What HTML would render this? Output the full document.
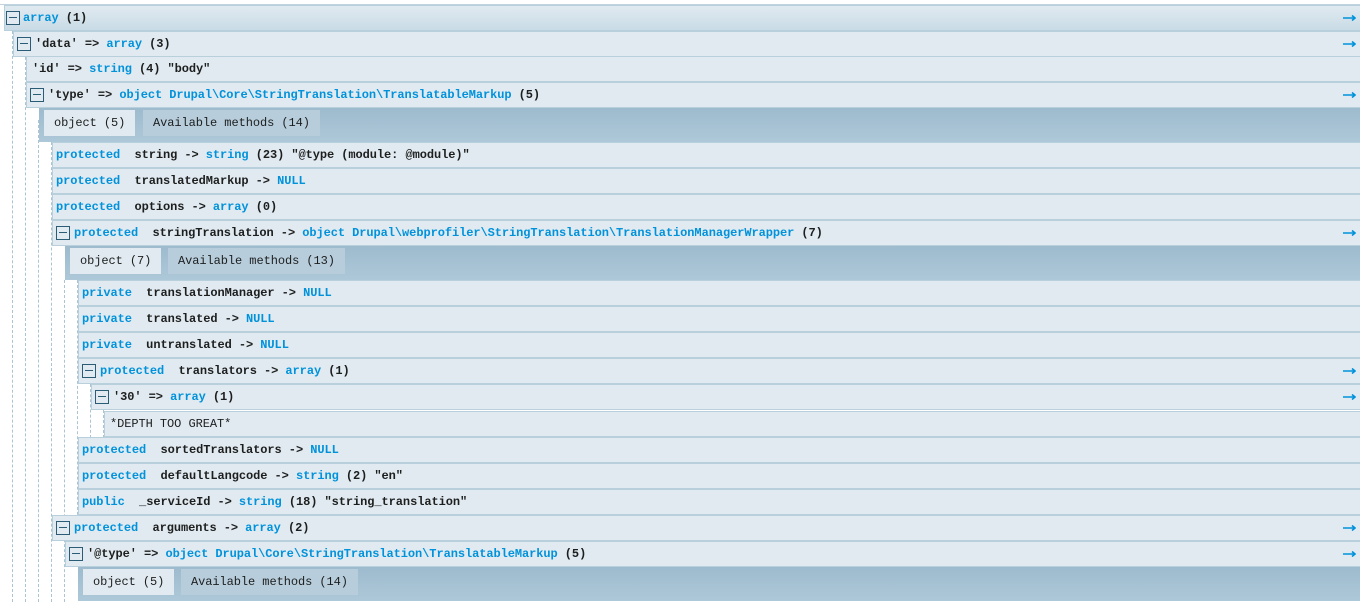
<!DOCTYPE html>
<html><head><meta charset="utf-8">
<style>
html,body{margin:0;padding:0;background:#fff;width:1360px;height:602px;overflow:hidden;position:relative;font-family:"Liberation Mono",monospace;font-size:12px;letter-spacing:-0.07px}
.r{position:absolute;right:0;height:24px;background:#e0eaf0;border:1px solid #b8cfdc;border-right:none;line-height:24px;color:#1d1e1e;font-weight:bold;white-space:pre;box-sizing:content-box}
.r.h{background:linear-gradient(#e0eaf0,#c9dbe6)}
.b{color:#0092db}
.n{font-weight:normal}
.t{position:absolute;top:5px;width:12px;height:12px;border:1px solid #2b5c76;background:#e0eaf0}
.t:after{content:"";position:absolute;left:2px;right:2px;top:5px;height:1px;background:#2b5c76}
.a{position:absolute;right:4px;top:8px;width:13px;height:8px}
.bar{position:absolute;right:0;height:34px;background:linear-gradient(#9dbbce,#adc8d8)}
.tab{position:absolute;top:2px;height:26px;line-height:26px;font-weight:normal;color:#1d1e1e;padding:0 10px;white-space:pre}
.tab.on{background:#e0eaf0}
.tab.off{background:#b7cddb}
.d{position:absolute;width:0;border-left:1px dashed #aac4d4;bottom:0}
</style></head><body>
<svg width="0" height="0" style="position:absolute"><symbol id="ar" viewBox="0 0 13 8"><path d="M0 4H12M9 1.5L12 4L9 6.5" stroke="#0092db" stroke-width="1.6" fill="none"/></symbol></svg>
<div style="position:absolute;left:0;top:0;right:0;height:4px;background:#fff;border-bottom:1px solid #c0d3de"></div>
<div class="d" style="left:12px;top:31px"></div>
<div class="d" style="left:25px;top:57px"></div>
<div class="d" style="left:38px;top:120px"></div>
<div class="d" style="left:51px;top:142px"></div>
<div class="d" style="left:64px;top:280px"></div>
<div class="d" style="left:77px;top:280px;bottom:auto;height:250px"></div>
<div class="d" style="left:90px;top:384px;bottom:auto;height:54px"></div>
<div class="d" style="left:103px;top:410px;bottom:auto;height:28px"></div>

<div class="r h" style="left:4px;top:5px"><span class="t" style="left:1px"></span><span style="position:absolute;left:18px"><span class="b">array</span> (1)</span><svg class="a"><use href="#ar"/></svg></div>
<div class="r" style="left:13px;top:31px"><span class="t" style="left:3px"></span><span style="position:absolute;left:21px">'data' =&gt; <span class="b">array</span> (3)</span><svg class="a"><use href="#ar"/></svg></div>
<div class="r" style="left:26px;top:56px"><span style="position:absolute;left:5px">'id' =&gt; <span class="b">string</span> (4) "body"</span></div>
<div class="r" style="left:26px;top:82px"><span class="t" style="left:3px"></span><span style="position:absolute;left:21px">'type' =&gt; <span class="b">object Drupal\Core\StringTranslation\TranslatableMarkup</span> (5)</span><svg class="a"><use href="#ar"/></svg></div>
<div class="bar" style="left:39px;top:108px"><span class="tab on" style="left:5px">object (5)</span><span class="tab off" style="left:104px">Available methods (14)</span></div>

<div class="r" style="left:52px;top:142px"><span style="position:absolute;left:3px"><span class="b">protected</span>  string -&gt; <span class="b">string</span> (23) "@type (module: @module)"</span></div>
<div class="r" style="left:52px;top:168px"><span style="position:absolute;left:3px"><span class="b">protected</span>  translatedMarkup -&gt; <span class="b">NULL</span></span></div>
<div class="r" style="left:52px;top:194px"><span style="position:absolute;left:3px"><span class="b">protected</span>  options -&gt; <span class="b">array</span> (0)</span></div>
<div class="r" style="left:52px;top:220px"><span class="t" style="left:3px"></span><span style="position:absolute;left:21px"><span class="b">protected</span>  stringTranslation -&gt; <span class="b">object Drupal\webprofiler\StringTranslation\TranslationManagerWrapper</span> (7)</span><svg class="a"><use href="#ar"/></svg></div>
<div class="bar" style="left:65px;top:246px"><span class="tab on" style="left:5px">object (7)</span><span class="tab off" style="left:103px">Available methods (13)</span></div>

<div class="r" style="left:78px;top:280px"><span style="position:absolute;left:3px"><span class="b">private</span>  translationManager -&gt; <span class="b">NULL</span></span></div>
<div class="r" style="left:78px;top:306px"><span style="position:absolute;left:3px"><span class="b">private</span>  translated -&gt; <span class="b">NULL</span></span></div>
<div class="r" style="left:78px;top:332px"><span style="position:absolute;left:3px"><span class="b">private</span>  untranslated -&gt; <span class="b">NULL</span></span></div>
<div class="r" style="left:78px;top:358px"><span class="t" style="left:3px"></span><span style="position:absolute;left:21px"><span class="b">protected</span>  translators -&gt; <span class="b">array</span> (1)</span><svg class="a"><use href="#ar"/></svg></div>
<div class="r" style="left:91px;top:384px"><span class="t" style="left:3px"></span><span style="position:absolute;left:21px">'30' =&gt; <span class="b">array</span> (1)</span><svg class="a"><use href="#ar"/></svg></div>
<div class="r" style="left:104px;top:411px"><span class="n" style="position:absolute;left:5px">*DEPTH TOO GREAT*</span></div>
<div class="r" style="left:78px;top:437px"><span style="position:absolute;left:3px"><span class="b">protected</span>  sortedTranslators -&gt; <span class="b">NULL</span></span></div>
<div class="r" style="left:78px;top:463px"><span style="position:absolute;left:3px"><span class="b">protected</span>  defaultLangcode -&gt; <span class="b">string</span> (2) "en"</span></div>
<div class="r" style="left:78px;top:489px"><span style="position:absolute;left:3px"><span class="b">public</span>  _serviceId -&gt; <span class="b">string</span> (18) "string_translation"</span></div>
<div class="r" style="left:52px;top:515px"><span class="t" style="left:3px"></span><span style="position:absolute;left:21px"><span class="b">protected</span>  arguments -&gt; <span class="b">array</span> (2)</span><svg class="a"><use href="#ar"/></svg></div>
<div class="r" style="left:65px;top:541px"><span class="t" style="left:3px"></span><span style="position:absolute;left:21px">'@type' =&gt; <span class="b">object Drupal\Core\StringTranslation\TranslatableMarkup</span> (5)</span><svg class="a"><use href="#ar"/></svg></div>
<div class="bar" style="left:78px;top:567px"><span class="tab on" style="left:5px">object (5)</span><span class="tab off" style="left:103px">Available methods (14)</span></div>
</body></html>
